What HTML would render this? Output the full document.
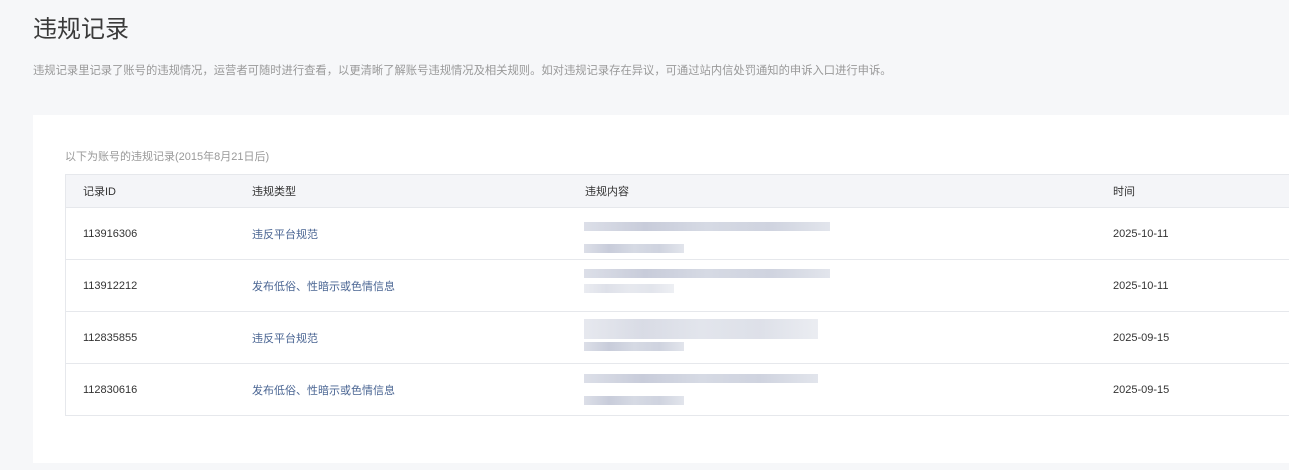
<!DOCTYPE html><html><head><meta charset="utf-8"><style>
body{margin:0;width:1289px;height:470px;background:#f6f7f9;font-family:"Liberation Sans","Noto Sans CJK SC",sans-serif;overflow:hidden;position:relative}
.t{position:absolute;left:33px;top:9px;font-size:24px;color:#3a3a3a}
.d{position:absolute;left:33px;top:62px;font-size:11.3px;color:#999}
.card{position:absolute;left:33px;top:115px;width:1256px;height:348px;background:#fff}
.cap{position:absolute;left:65px;top:148px;font-size:11px;color:#999}
.tb{position:absolute;left:65px;top:174px;width:1224px;border-left:1px solid #e6e8ec;border-top:1px solid #e6e8ec}
.r{position:relative;height:51px;border-bottom:1px solid #e6e8ec;font-size:11px;color:#333}
.h{height:32px;background:#f4f5f8}
.r span{position:absolute;top:50%;transform:translateY(-50%)}
.c1{left:17px}.c2{left:186px}.c4{left:1047px}
.l{color:#4a6593}
.b{position:absolute;left:518px;height:9px;background:linear-gradient(90deg,#dcdfe8,#c8ccda,#d6dae4,#cfd3df,#e2e5ec)}
</style></head><body>
<div class="t">违规记录</div>
<div class="d">违规记录里记录了账号的违规情况，运营者可随时进行查看，以更清晰了解账号违规情况及相关规则。如对违规记录存在异议，可通过站内信处罚通知的申诉入口进行申诉。</div>
<div class="card"></div>
<div class="cap">以下为账号的违规记录(2015年8月21日后)</div>
<div class="tb">
<div class="r h"><span class="c1">记录ID</span><span class="c2">违规类型</span><span style="left:519px">违规内容</span><span class="c4">时间</span></div>
<div class="r"><span class="c1">113916306</span><span class="c2 l">违反平台规范</span><div class="b" style="top:14px;width:246px"></div><div class="b" style="top:36px;width:100px"></div><span class="c4">2025-10-11</span></div>
<div class="r"><span class="c1">113912212</span><span class="c2 l">发布低俗、性暗示或色情信息</span><div class="b" style="top:9px;width:246px"></div><div class="b" style="top:24px;width:90px;opacity:.6"></div><span class="c4">2025-10-11</span></div>
<div class="r"><span class="c1">112835855</span><span class="c2 l">违反平台规范</span><div class="b" style="top:7px;width:234px;height:20px;opacity:.7"></div><div class="b" style="top:30px;width:100px"></div><span class="c4">2025-09-15</span></div>
<div class="r"><span class="c1">112830616</span><span class="c2 l">发布低俗、性暗示或色情信息</span><div class="b" style="top:10px;width:234px"></div><div class="b" style="top:32px;width:100px"></div><span class="c4">2025-09-15</span></div>
</div>
</body></html>
